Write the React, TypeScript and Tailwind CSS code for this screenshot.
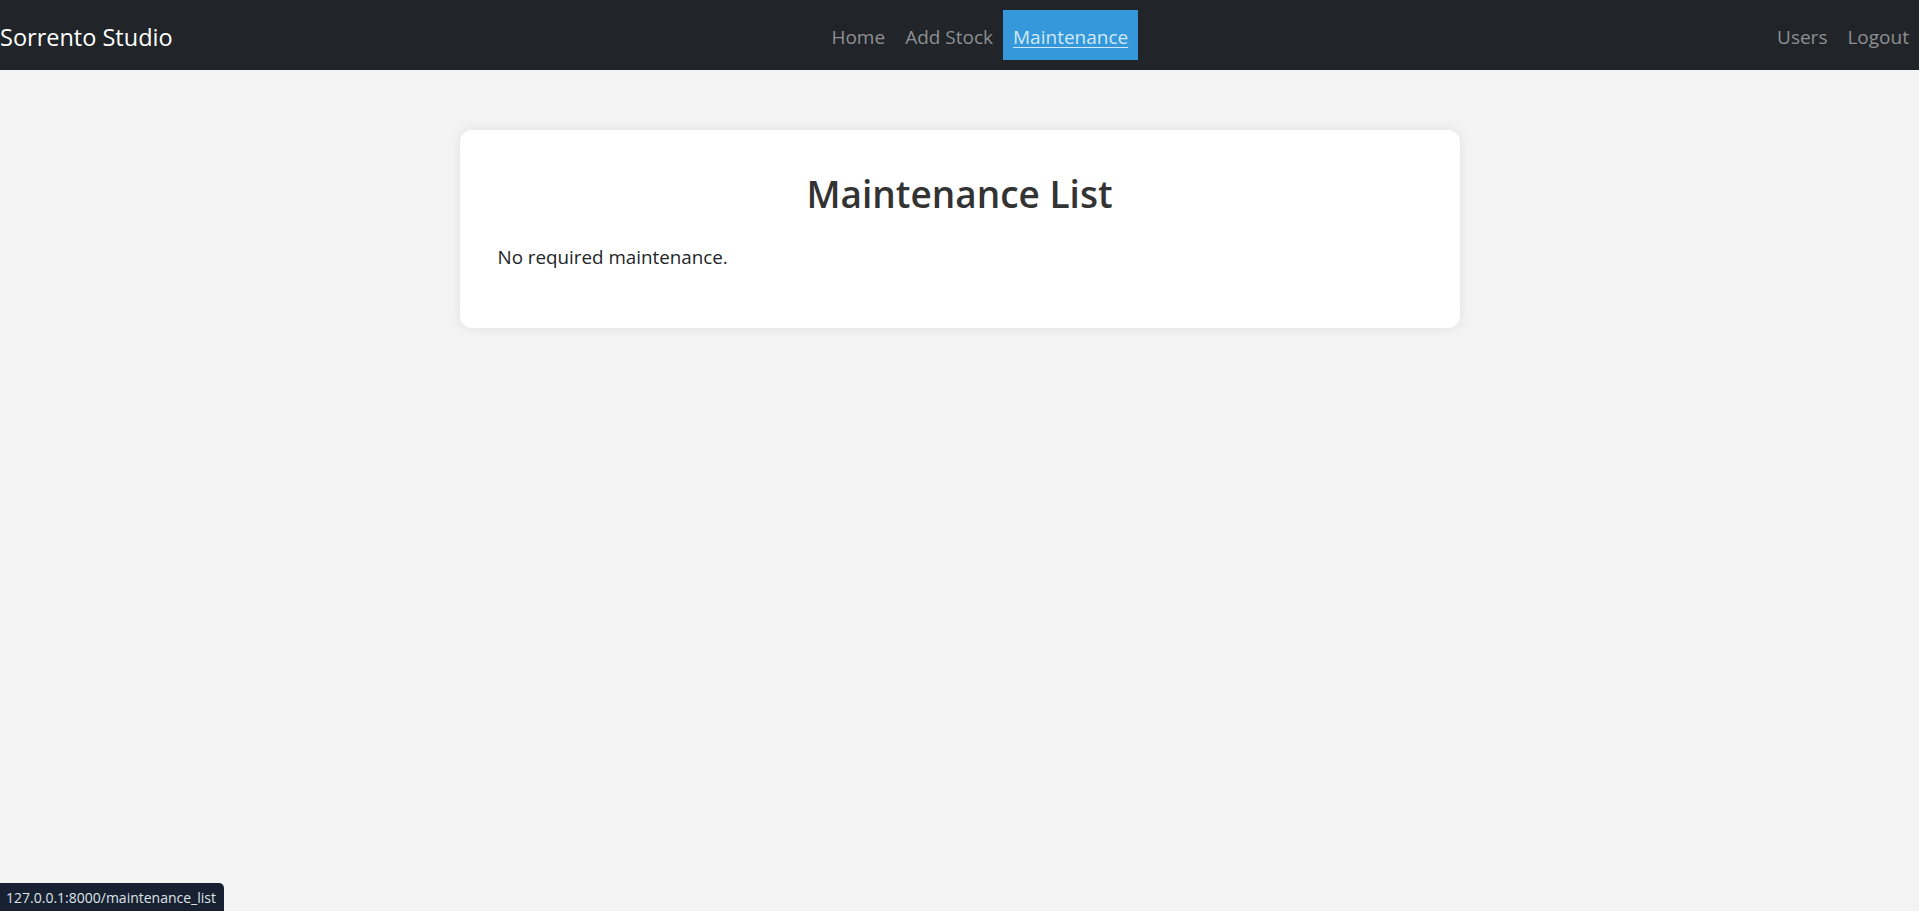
import React from "react";

export default function App() {
  return (
    <div className="relative h-screen overflow-hidden bg-[#f3f3f3] font-['Open_Sans','Noto_Sans',sans-serif]">
      <nav className="flex h-[70px] items-center bg-[#212529]">
        <a href="#" className="mr-[20px] mt-[3px] text-[23.5px] leading-[38px] text-white no-underline">
          Sorrento Studio
        </a>
        <ul className="mx-auto flex">
          <li>
            <a href="#" className="block px-[10px] pb-[8px] pt-[12px] text-[19px] leading-[30px] text-[#8d8f92]">
              Home
            </a>
          </li>
          <li>
            <a href="#" className="block px-[10px] pb-[8px] pt-[12px] text-[19px] leading-[30px] text-[#8d8f92]">
              Add Stock
            </a>
          </li>
          <li>
            <a
              href="#"
              className="block bg-[#3498db] px-[10px] pb-[8px] pt-[12px] text-[19px] leading-[30px] text-[#d2e8f7] underline underline-offset-[3px]"
            >
              Maintenance
            </a>
          </li>
        </ul>
        <ul className="flex">
          <li>
            <a href="#" className="block px-[10px] pb-[8px] pt-[12px] text-[19px] leading-[30px] text-[#8d8f92]">
              Users
            </a>
          </li>
          <li>
            <a href="#" className="block px-[10px] pb-[8px] pt-[12px] text-[19px] leading-[30px] text-[#8d8f92]">
              Logout
            </a>
          </li>
        </ul>
      </nav>
      <main className="pt-[60px]">
        <div className="mx-auto w-[1000px] rounded-[12px] bg-white px-[38px] pb-[36px] pt-[40px] shadow-[0_0_12px_rgba(0,0,0,0.08)]">
          <h2 className="mb-[24px] text-center text-[37px] font-semibold leading-[48px] text-[#333333]">
            Maintenance List
          </h2>
          <p className="mb-[20px] text-[18.8px] leading-[30px] text-[#212529]">No required maintenance.</p>
        </div>
      </main>
      <div className="absolute bottom-0 left-0 flex h-[28px] items-center rounded-tr-[5px] bg-[#172131] pl-[6px] pr-[8px] text-[14px] text-[#dfe3e8]">
        127.0.0.1:8000/maintenance_list
      </div>
    </div>
  );
}
